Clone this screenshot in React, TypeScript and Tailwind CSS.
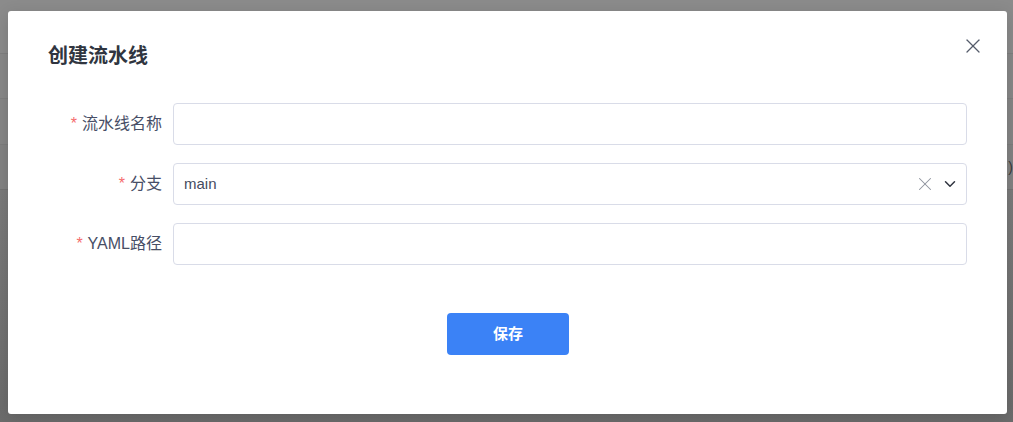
import { X, ChevronDown } from "lucide-react";

const fieldCls =
  "h-[42px] flex-1 rounded-[4px] border border-[#d9dce8] bg-white px-[10px] text-[15px] text-[#454b5e] outline-none";

function FormRow({
  label,
  children,
}: {
  label: string;
  children: React.ReactNode;
}) {
  return (
    <div className="flex items-center">
      <label className="flex w-[125px] shrink-0 items-center justify-end pr-[11px] text-[16px] text-[#474e66]">
        <span className="mr-[5px] text-[#f56c6c]">*</span>
        {label}
      </label>
      {children}
    </div>
  );
}

export default function App() {
  return (
    <div
      className="relative h-[422px] w-[1013px] overflow-hidden bg-[#7a7a7a]"
      style={{ fontFamily: '"Liberation Sans", "Noto Sans CJK SC", sans-serif' }}
    >
      {/* 背景页面（遮罩下） */}
      <div className="flex h-full flex-col">
        <div className="h-[54px] border-b border-[#7f7f7f] bg-[#8b8b8b]" />
        <div className="h-[45px] border-b border-[#7f7f7f] bg-[#888888]" />
        <div className="h-[46px] border-b border-[#7d7d7d] bg-[#868686]" />
        <div className="flex h-[45px] items-center justify-end border-b border-[#747474] bg-[#838383] text-[14px] text-[#3a3a3a]">
          )
        </div>
        <div className="flex-1 bg-gradient-to-b from-[#7b7b7b] to-[#6c6c6c]" />
      </div>

      {/* 弹窗 */}
      <div className="absolute left-[8px] top-[11px] h-[403px] w-[999px] rounded-[3px] bg-white px-[40px] pt-[33px] shadow-[0_4px_16px_rgba(0,0,0,0.15)]">
        <div className="flex items-center justify-between">
          <h2 className="text-[20px] font-bold leading-[24px] text-[#303540]">
            创建流水线
          </h2>
          <button
            type="button"
            className="-mr-[18px] -mt-[20px] text-[#555c6b]"
            aria-label="关闭"
          >
            <X size={24} strokeWidth={1.3} />
          </button>
        </div>

        <div className="mt-[35px] flex flex-col gap-[18px]">
          <FormRow label="流水线名称">
            <input className={fieldCls} />
          </FormRow>
          <FormRow label="分支">
            <div className={`${fieldCls} flex items-center`}>
              <span className="flex-1">main</span>
              <X size={22} strokeWidth={1.1} className="text-[#8d929c]" />
              <ChevronDown
                size={18}
                strokeWidth={2}
                className="-mr-[3px] ml-[5px] text-[#303540]"
              />
            </div>
          </FormRow>
          <FormRow label="YAML路径">
            <input className={fieldCls} />
          </FormRow>
        </div>

        <div className="mt-[48px] flex justify-center pl-[1px]">
          <button
            type="button"
            className="h-[42px] w-[122px] rounded-[4px] bg-[#3b82f6] text-[15px] font-bold text-white"
          >
            保存
          </button>
        </div>
      </div>
    </div>
  );
}
